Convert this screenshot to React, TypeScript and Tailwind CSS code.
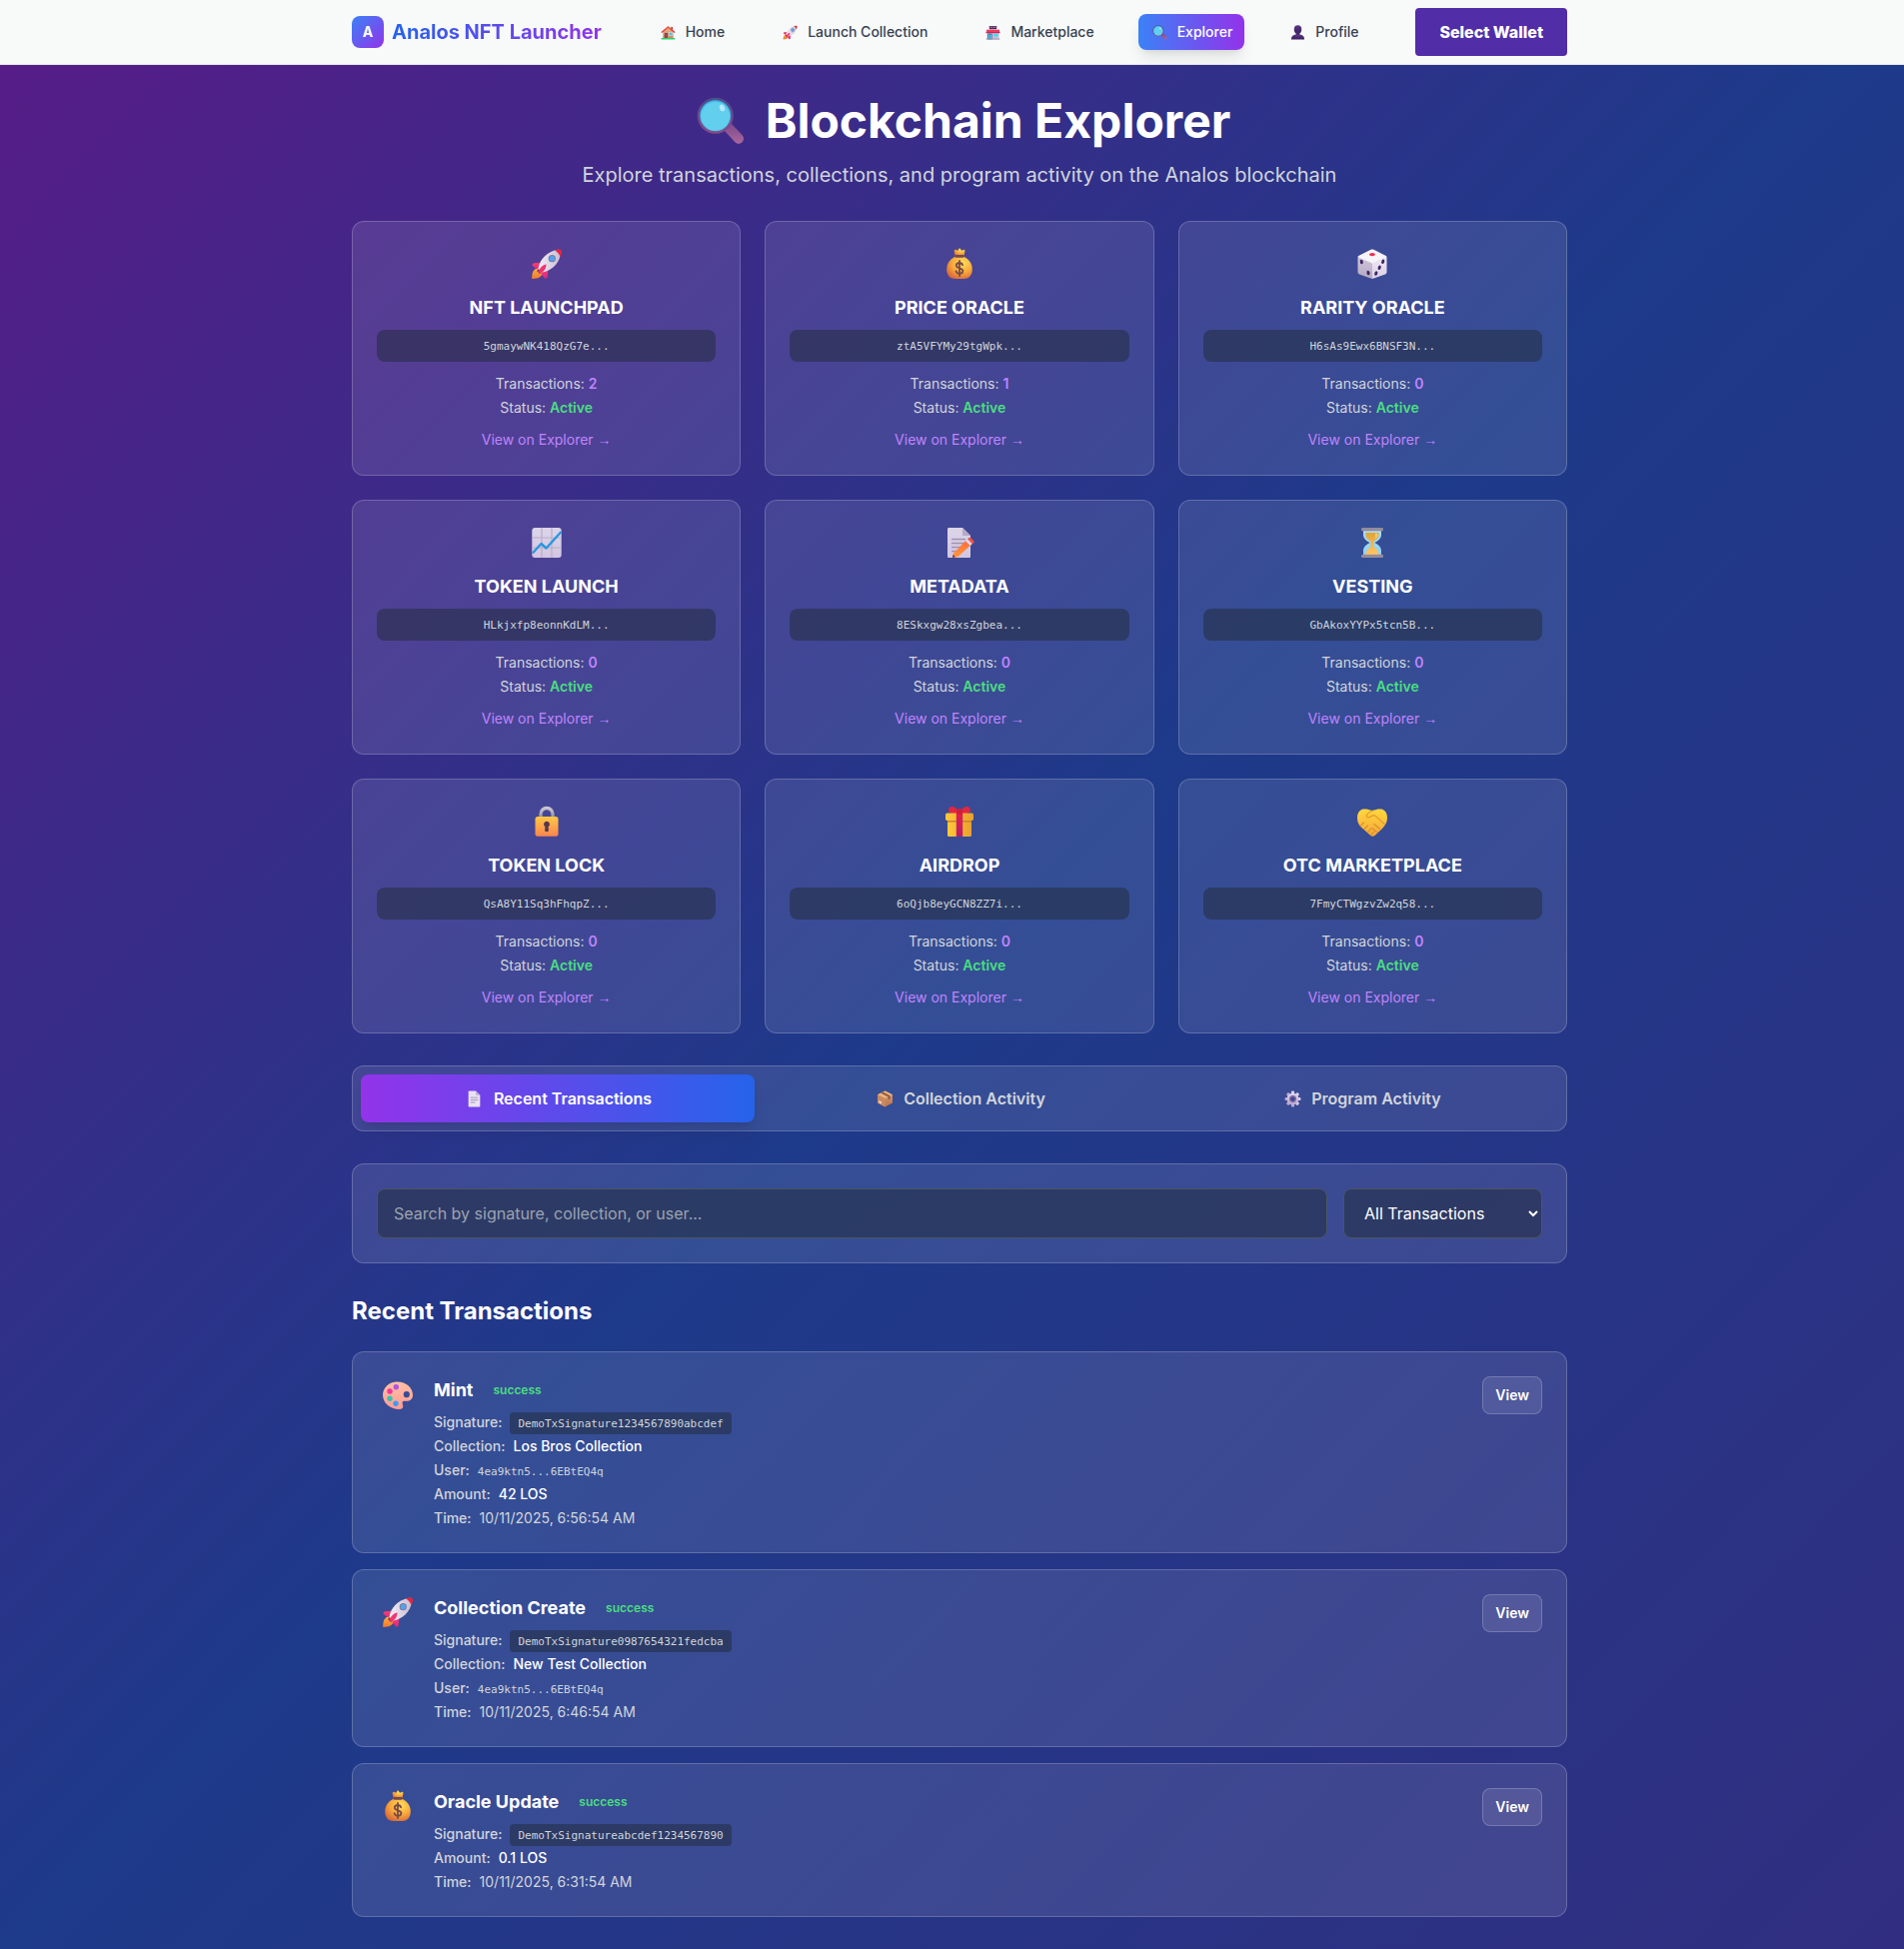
import { useState } from 'react';
import type { ReactNode } from 'react';
import clsx from 'clsx';

type EmojiName =
  | 'house' | 'rocket' | 'store' | 'magnifier' | 'bust' | 'moneybag' | 'dice' | 'chart' | 'memo'
  | 'hourglass' | 'lock' | 'gift' | 'handshake' | 'page' | 'package' | 'gear' | 'palette';

function Gradient({ id, from, to, horizontal }: { id: string; from: string; to: string; horizontal?: boolean }) {
  return (
    <linearGradient id={id} x1="0" y1="0" x2={horizontal ? '1' : '0'} y2={horizontal ? '0' : '1'}>
      <stop offset="0" stopColor={from} />
      <stop offset="1" stopColor={to} />
    </linearGradient>
  );
}

function SharedGradients() {
  return (
    <svg className="absolute size-0" aria-hidden="true">
      <defs>
        <Gradient id="g-roof" from="#f4603a" to="#d8354a" />
        <Gradient id="g-wall" from="#f2b58a" to="#c98a5f" />
        <Gradient id="g-body" from="#f3eef8" to="#c9bcd2" horizontal />
        <Gradient id="g-fin" from="#ff3f6c" to="#d92b82" />
        <Gradient id="g-flame" from="#ffb13d" to="#f07a2c" />
        <Gradient id="g-rim" from="#4a4f8c" to="#8a4a86" />
        <Gradient id="g-handle" from="#7d4a8e" to="#a9679c" />
        <Gradient id="g-bust" from="#5a3a86" to="#3b1d5c" />
        <radialGradient id="g-bag" cx="0.62" cy="0.3" r="0.75">
          <stop offset="0" stopColor="#ffdf5c" />
          <stop offset="0.55" stopColor="#f7a93b" />
          <stop offset="1" stopColor="#d9683a" />
        </radialGradient>
        <Gradient id="g-dieleft" from="#cfc6da" to="#b5a8c2" />
        <Gradient id="g-dieright" from="#efe9f5" to="#dad0e4" />
        <Gradient id="g-paper" from="#dcd6ea" to="#d3c5e2" />
        <Gradient id="g-pencil" from="#ff6a3c" to="#ff9a3a" />
        <Gradient id="g-glass" from="#a9dcf5" to="#8fd0f5" />
        <Gradient id="g-sand" from="#e0a436" to="#ffc765" />
        <Gradient id="g-lock" from="#ffc847" to="#f9844f" />
        <Gradient id="g-shackle" from="#c9c5d2" to="#8e8798" />
        <Gradient id="g-gift" from="#ffc93a" to="#e9a02f" horizontal />
        <Gradient id="g-ribbon" from="#e0224c" to="#b81c6c" />
        <Gradient id="g-hand" from="#ffd83e" to="#f5a63a" />
        <Gradient id="g-box" from="#dca273" to="#b9734f" />
        <Gradient id="g-gear" from="#e2d5f0" to="#b8a4cf" />
        <Gradient id="g-palette" from="#ffc0a4" to="#ff9c97" />
      </defs>
    </svg>
  );
}

const drawings: Record<EmojiName, ReactNode> = {
  house: (
    <>
      <rect x="22" y="4" width="4" height="8" fill="#b3455c" />
      <path d="M5 14 16 5l11 9v14H5z" fill="url(#g-wall)" />
      <path d="M16 2 1.500 14.200a1.500 1.500 0 0 0 2 2.200L16 6.500l12.500 9.900a1.500 1.500 0 0 0 2-2.200z" fill="url(#g-roof)" />
      <rect x="8" y="17" width="7" height="11" fill="#8a4b4f" />
      <rect x="18" y="16" width="7" height="7" fill="#3fc3f5" stroke="#f4e4dc" strokeWidth="1" />
      <rect x="1" y="27.500" width="30" height="3.500" rx="1.700" fill="#2fd06a" />
    </>
  ),
  rocket: (
    <>
      <path d="M9 19.500c-4 .5-7 3-7.500 7-.2 2-.5 3.500-.3 4.300.9.300 2.800 0 4.500-.2 3.800-.4 6.300-3.400 6.300-7z" fill="url(#g-flame)" />
      <path d="M8 21 11 24.500 9 26 6 23z" fill="#6d3b63" />
      <path d="M13.500 14.500 3.500 15.200c-1.400.3-2.300 1.400-2 2.600L5.500 21l6-1z" fill="url(#g-fin)" />
      <path d="M17.500 18.500 16.800 28.500c-.3 1.600-1.500 2.500-2.700 2L10.800 26.500l1.200-6z" fill="url(#g-fin)" />
      <path d="M7.500 20.500C9 12 16 3.500 27.500 1.800c1.600-.2 3 1 2.800 2.700C28.800 16 20.500 23 11.500 24.500z" fill="url(#g-body)" />
      <path d="M24 2.600c2.200-1 4.600-1.300 5.800-.9.900.3 1.400 1.500 1.100 3-.2 1.500-.6 2.900-1.300 4.500C28.800 6.500 26.500 4 24 2.600z" fill="#e8243f" />
      <path d="M15.500 16.500c-3.500.5-6.500 3.500-8 7.500l1.500 1.600c4-1.600 6.500-4.600 6.500-9.100z" fill="#f0356f" />
      <circle cx="21.300" cy="10.700" r="3.600" fill="#7d7794" />
      <circle cx="21.300" cy="10.700" r="2.600" fill="#4fa3f5" />
    </>
  ),
  store: (
    <>
      <rect x="3" y="13" width="26" height="17" fill="#cfc4dd" />
      <rect x="8" y="2" width="16" height="7" rx="1" fill="#4a2a5c" />
      <path d="M10.500 6V3.500M14 6V3.500M18 6V3.500M21.500 6V3.500" stroke="#f0d9ee" strokeWidth="1.400" />
      <path d="M2 10h28v6H2z" fill="#f5385f" />
      <path d="M1 15h30v2.500H1z" fill="#c3265c" />
      <rect x="5" y="18.500" width="9" height="12" fill="#27567f" />
      <rect x="6.500" y="20" width="2.600" height="10.500" fill="#57d5f2" />
      <rect x="10.300" y="20" width="2.600" height="10.500" fill="#57d5f2" />
      <rect x="17" y="19" width="10" height="6" fill="#57d5f2" />
      <rect x="1.500" y="29" width="29" height="2" fill="#93829f" />
    </>
  ),
  magnifier: (
    <>
      <path d="m19 21.500 3.200-3.200c.5-.4 1-.4 1.500 0l6.600 7c1.500 1.700 1.300 3.600 0 4.900s-3.300 1.400-4.800-.2L19 23z" fill="url(#g-handle)" />
      <circle cx="12.500" cy="12.500" r="12" fill="url(#g-rim)" />
      <circle cx="12.500" cy="12.500" r="10.300" fill="#3fb8ea" />
      <circle cx="12.500" cy="12.900" r="9.600" fill="#62cfee" />
      <ellipse cx="17" cy="7.300" rx="1.700" ry="2.300" fill="#b5e8fa" transform="rotate(-18 17 7.300)" />
    </>
  ),
  bust: (
    <>
      <ellipse cx="16" cy="9.500" rx="8" ry="9" fill="url(#g-bust)" />
      <path d="M12 15h8v8h-8z" fill="#4a2a70" />
      <path d="M2 31c0-7 3.500-9.500 9.500-10.500 3 2.300 6 2.300 9 0C26.500 21.500 30 24 30 31z" fill="url(#g-bust)" />
    </>
  ),
  moneybag: (
    <>
      <path d="M11.600 8 10.600 3.200c-.2-1.200 1-1.800 2-1.200l1.600.8L15.200 1c.5-.9 1.300-.9 1.800 0l1 1.800 1.700-.8c1-.5 2 .1 1.800 1.200L20.500 8z" fill="url(#g-bag)" />
      <path d="M12 8.500h8c6 3 8.800 7.500 8.800 13 0 6.500-3.800 9.500-8.800 9.500h-8c-5 0-8.800-3-8.800-9.500 0-5.500 2.800-10 8.800-13z" fill="url(#g-bag)" />
      <rect x="11.500" y="7" width="9" height="2.800" rx="1" fill="#75474f" />
      <path d="M19.100 17.200c-.4-1.500-1.500-2.200-3.100-2.200-1.900 0-3.200 1-3.200 2.600 0 3.600 6.600 1.900 6.600 5.500 0 1.700-1.400 2.700-3.400 2.700-1.800 0-3.100-.9-3.400-2.600M16 13v15" fill="none" stroke="#7a4b45" strokeWidth="1.800" strokeLinecap="round" />
    </>
  ),
  dice: (
    <>
      <path d="M16 15v16L3.200 26.500C2 26 1.500 25 1.500 24V9z" fill="url(#g-dieleft)" />
      <path d="M16 15v16l12.800-4.500c1.200-.5 1.700-1.500 1.700-2.500V9z" fill="url(#g-dieright)" />
      <path d="M16 15.500 2 9.500c-.6-.4-.5-1.200.2-1.600L14.500 1.800c1-.5 2-.5 3 0l12.300 6.100c.7.4.8 1.200.2 1.600z" fill="#f7f4fa" />
      <ellipse cx="16" cy="6.600" rx="2.900" ry="1.700" fill="#f0304f" />
      <g fill="#3f2465">
        <ellipse cx="5.300" cy="14" rx="1.500" ry="2.300" transform="rotate(-15 5.300 14)" />
        <ellipse cx="12" cy="25" rx="1.500" ry="2.300" transform="rotate(-15 12 25)" />
        <ellipse cx="26.700" cy="13.800" rx="1.500" ry="2.300" transform="rotate(18 26.700 13.800)" />
        <ellipse cx="23.200" cy="19.700" rx="1.500" ry="2.300" transform="rotate(18 23.200 19.700)" />
        <ellipse cx="19.800" cy="25.500" rx="1.500" ry="2.300" transform="rotate(18 19.800 25.500)" />
      </g>
    </>
  ),
  chart: (
    <>
      <rect x="1.300" y="1" width="29.400" height="30" rx="3" fill="url(#g-paper)" />
      <path d="M11 1v30M21 1v30M1.300 11h29.400M1.300 21h29.400" stroke="#b9adc9" strokeWidth="1.200" />
      <path d="M1.800 26.500 10.500 17l5 4.500L30.500 5" fill="none" stroke="#2a97dc" strokeWidth="2.400" strokeLinejoin="round" />
    </>
  ),
  memo: (
    <>
      <path d="M4 2.500C4 1.500 4.700 1 5.500 1H19l8 8v20.500c0 1-.7 1.500-1.500 1.500h-20C4.700 31 4 30.500 4 29.500z" fill="url(#g-paper)" />
      <path d="M19 1v6.500c0 1 .6 1.500 1.500 1.500H27z" fill="#b5a9c6" />
      <path d="M8 12.500h14M8 16.500h14M8 20.500h11M8 24.500h7" stroke="#9f95ad" strokeWidth="1.500" />
      <path d="m10 26.500 13-13.300 4.800 4.800L14.500 30 9 31z" fill="url(#g-pencil)" />
      <path d="m22 14.200 2.200-2.200 4.800 4.800-2.200 2.200z" fill="#ded7ee" />
      <path d="m24 12.300 1-1c.8-.8 1.600-.8 2.400 0l2.700 2.700c.8.8.8 1.500 0 2.300l-1.100 1z" fill="#f25345" />
      <path d="m9.600 27.800 2.400 2.500-3.200.8z" fill="#6b3a50" />
    </>
  ),
  hourglass: (
    <>
      <path d="M7 3.500h18v4c0 4-2 6-6.500 8.500 4.500 2.500 6.500 4.500 6.500 8.500v4H7v-4c0-4 2-6 6.500-8.500C9 13.500 7 11.500 7 7.500z" fill="url(#g-glass)" />
      <path d="M9.500 6h13v2.500c0 3-2.500 4.500-5 6v6c3 1.500 5 4 5 7.500h-13c0-3.500 2-6 5-7.500v-6c-2.500-1.500-5-3-5-6z" fill="url(#g-sand)" />
      <path d="M19 6.500h2.500v2c0 1.500-1 2.500-2.500 3.500z" fill="#ffd985" opacity=".7" />
      <rect x="5" y="1" width="22" height="3.300" rx="1.300" fill="#958c99" />
      <rect x="5" y="27.700" width="22" height="3.300" rx="1.300" fill="#958c99" />
    </>
  ),
  lock: (
    <>
      <path d="M10 13V8.500a6 6 0 0 1 12 0V13" fill="none" stroke="url(#g-shackle)" strokeWidth="3.300" />
      <rect x="4.500" y="11" width="23" height="19.800" rx="2.500" fill="url(#g-lock)" />
      <path d="M16 15.700a3 3 0 0 0-1.600 5.500l-.3 3.600c0 .7.400 1.200 1 1.200h1.800c.6 0 1-.5 1-1.200l-.3-3.600A3 3 0 0 0 16 15.700z" fill="#54394c" />
    </>
  ),
  gift: (
    <>
      <path d="M13 8C8 8.500 5 7 5 4.500 5 2 7 .8 9 1c3 .2 5 3 5 7zM19 8c5 .5 8-1 8-3.500C27 2 25 .8 23 1c-3 .2-5 3-5 7z" fill="#e3263f" />
      <rect x="4" y="14" width="24" height="17" rx="1.500" fill="url(#g-gift)" />
      <rect x="2" y="7.500" width="28" height="7.500" rx="1.700" fill="url(#g-gift)" />
      <path d="M4 15h24v1.500H4z" fill="#c9832b" />
      <path d="M12.800 6.500h6.400V31h-6.400z" fill="url(#g-ribbon)" />
      <rect x="13" y="3" width="6" height="6" rx="1.500" fill="#cf1f3c" />
    </>
  ),
  handshake: (
    <>
      <path d="M1 12c0-4.500 2.500-8 6-8.500 3-.3 5.500.2 9 1.500 3.500-1.300 6-1.800 9-1.500 3.500.5 6 4 6 8.500 0 5-2 7.500-5 11l-7 6.500c-1.800 1.700-4 1.500-5.500-.2l-9-8C2 18.500 1 16 1 12z" fill="url(#g-hand)" />
      <path d="M16.500 5c-2.500.8-5 2.500-6.200 4.600-.8 1.500 1 2.800 2.700 2 2-.9 3.400-1.900 5.200-2l9.800 8.700" fill="none" stroke="#e39a2c" strokeWidth="1.200" strokeLinecap="round" />
      <path d="m4.500 20 3-3M8 23.500l3.500-3.500M11.500 26.700 15 23M14.800 29l3-3M23.500 23.500 18 18.500M20.500 26.500 16 22.500" stroke="#dd8f2e" strokeWidth="1.100" strokeLinecap="round" />
    </>
  ),
  page: (
    <>
      <path d="M5 2.500C5 1.500 5.600 1 6.500 1H19l8 8v20.500c0 1-.6 1.500-1.500 1.500h-19C5.600 31 5 30.500 5 29.500z" fill="#e9e1f4" />
      <path d="M19 1v6.500c0 1 .6 1.500 1.500 1.500H27z" fill="#b9abd0" />
      <path d="M9 13.500h14M9 18h14M9 22.500h9" stroke="#a297b3" strokeWidth="1.800" />
    </>
  ),
  package: (
    <>
      <path d="M16 1 30 8v15.500L16 31 2 23.500V8z" fill="url(#g-box)" />
      <path d="M16 1 30 8l-14 7L2 8z" fill="#eab583" />
      <path d="M16 15v16L2 23.500V8z" fill="#c98a5e" />
      <path d="m8 5 14 7v5.500l3.500-1.700V10L12 3z" fill="#92583f" />
      <path d="m4.500 19 5 2.500v4l-5-2.500z" fill="#efd9da" />
    </>
  ),
  gear: (
    <>
      <g fill="url(#g-gear)">
        {[0, 45, 90, 135].map((angle) => (
          <rect key={angle} x="13" y="1" width="6" height="30" rx="2" transform={`rotate(${angle} 16 16)`} />
        ))}
        <circle cx="16" cy="16" r="11" />
      </g>
      <circle cx="16" cy="16" r="6.500" fill="#7e6a9c" />
      <circle cx="16" cy="16" r="4" fill="#3c4a94" />
    </>
  ),
  palette: (
    <>
      <path d="M15.500 3.500C7 3.500 1 9.500 1 16.800 1 24.500 8 31 17.500 31c2.700 0 4-1.500 3.700-3.500-.2-1.500-.9-2.200-.6-3.500.3-1.200 1.500-1.500 3.200-1.300 4.200.3 7.200-1.600 7.200-6 0-7.700-7-13.200-15.500-13.200zm9.300 9.600a3.100 3.100 0 1 1 0 6.200 3.100 3.100 0 0 1 0-6.200z" fill="url(#g-palette)" fillRule="evenodd" />
      <circle cx="14.300" cy="8.800" r="2.700" fill="#b155e0" />
      <circle cx="8" cy="13" r="2.700" fill="#f5359a" />
      <circle cx="8" cy="20.300" r="2.700" fill="#36c2b0" />
      <circle cx="14" cy="25.200" r="2.700" fill="#3b9cf2" />
    </>
  ),
};

function Emoji({ name, className }: { name: EmojiName; className: string }) {
  return (
    <svg viewBox="0 0 32 32" className={clsx('shrink-0', className)} aria-hidden="true">
      {drawings[name]}
    </svg>
  );
}

const navItems: { label: string; icon: EmojiName; active?: boolean }[] = [
  { label: 'Home', icon: 'house' },
  { label: 'Launch Collection', icon: 'rocket' },
  { label: 'Marketplace', icon: 'store' },
  { label: 'Explorer', icon: 'magnifier', active: true },
  { label: 'Profile', icon: 'bust' },
];

const programs: { name: string; icon: EmojiName; address: string; count: number }[] = [
  { name: 'NFT LAUNCHPAD', icon: 'rocket', address: '5gmaywNK418QzG7e...', count: 2 },
  { name: 'PRICE ORACLE', icon: 'moneybag', address: 'ztA5VFYMy29tgWpk...', count: 1 },
  { name: 'RARITY ORACLE', icon: 'dice', address: 'H6sAs9Ewx6BNSF3N...', count: 0 },
  { name: 'TOKEN LAUNCH', icon: 'chart', address: 'HLkjxfp8eonnKdLM...', count: 0 },
  { name: 'METADATA', icon: 'memo', address: '8ESkxgw28xsZgbea...', count: 0 },
  { name: 'VESTING', icon: 'hourglass', address: 'GbAkoxYYPx5tcn5B...', count: 0 },
  { name: 'TOKEN LOCK', icon: 'lock', address: 'QsA8Y11Sq3hFhqpZ...', count: 0 },
  { name: 'AIRDROP', icon: 'gift', address: '6oQjb8eyGCN8ZZ7i...', count: 0 },
  { name: 'OTC MARKETPLACE', icon: 'handshake', address: '7FmyCTWgzvZw2q58...', count: 0 },
];

const tabs: { label: string; icon: EmojiName }[] = [
  { label: 'Recent Transactions', icon: 'page' },
  { label: 'Collection Activity', icon: 'package' },
  { label: 'Program Activity', icon: 'gear' },
];

interface Transaction {
  title: string;
  icon: EmojiName;
  signature: string;
  collection?: string;
  user?: string;
  amount?: string;
  time: string;
}

const transactions: Transaction[] = [
  {
    title: 'Mint',
    icon: 'palette',
    signature: 'DemoTxSignature1234567890abcdef',
    collection: 'Los Bros Collection',
    user: '4ea9ktn5...6EBtEQ4q',
    amount: '42 LOS',
    time: '10/11/2025, 6:56:54 AM',
  },
  {
    title: 'Collection Create',
    icon: 'rocket',
    signature: 'DemoTxSignature0987654321fedcba',
    collection: 'New Test Collection',
    user: '4ea9ktn5...6EBtEQ4q',
    time: '10/11/2025, 6:46:54 AM',
  },
  {
    title: 'Oracle Update',
    icon: 'moneybag',
    signature: 'DemoTxSignatureabcdef1234567890',
    amount: '0.1 LOS',
    time: '10/11/2025, 6:31:54 AM',
  },
];

function Navbar() {
  return (
    <header className="border-b border-gray-200 bg-[#f8faf9] pl-[15px]">
      <div className="mx-auto flex h-16 max-w-[1280px] items-center justify-between px-8">
        <a href="#home" className="flex items-center gap-2">
          <span className="flex size-8 items-center justify-center rounded-lg bg-linear-to-br/srgb from-[#3b82f6] to-[#9333ea] text-sm font-bold text-white">
            A
          </span>
          <span className="bg-linear-to-r/srgb from-[#2563eb] to-[#9333ea] bg-clip-text text-xl font-bold text-transparent">
            Analos NFT Launcher
          </span>
        </a>
        <nav className="flex items-center gap-8" aria-label="Main">
          {navItems.map((item) => (
            <a
              key={item.label}
              href={`#${item.label.toLowerCase().replace(' ', '-')}`}
              aria-current={item.active ? 'page' : undefined}
              className={clsx(
                'flex items-center gap-2 rounded-lg px-3 py-2 text-sm font-medium',
                item.active
                  ? 'bg-linear-to-r/srgb from-[#3b82f6] to-[#9333ea] text-white shadow-lg'
                  : 'text-[#374151]',
              )}
            >
              <span className="flex w-[19px] justify-center">
                <Emoji name={item.icon} className="size-[15px]" />
              </span>
              {item.label}
            </a>
          ))}
        </nav>
        <button type="button" className="h-12 rounded bg-[#512da8] px-6 text-base font-extrabold text-white">
          Select Wallet
        </button>
      </div>
    </header>
  );
}

function ProgramCard({ name, icon, address, count }: (typeof programs)[number]) {
  return (
    <article className="rounded-xl border border-white/20 bg-white/10 p-6 text-center">
      <div className="mb-3 flex h-9 items-center justify-center">
        <Emoji name={icon} className="size-8" />
      </div>
      <h2 className="mb-2 text-lg font-bold text-white">{name}</h2>
      <p className="mb-3 rounded-lg bg-[#1f2937]/50 px-2 pt-[9px] pb-[7px] font-['DejaVu_Sans_Mono',monospace] text-[11px] leading-4 text-[#d1d5db]">
        {address}
      </p>
      <div className="space-y-1 text-sm text-[#d1d5db]">
        <p>
          Transactions: <span className="font-semibold text-[#c084fc]">{count}</span>
        </p>
        <p>
          Status: <span className="font-semibold text-[#4ade80]">Active</span>
        </p>
      </div>
      <a href="#explorer" className="mt-3 inline-block text-sm text-[#c084fc]">
        View on Explorer <span className="font-['Liberation_Sans',sans-serif]">→</span>
      </a>
    </article>
  );
}

function DetailRow({ label, children }: { label: string; children: ReactNode }) {
  return (
    <div className="flex h-5 items-baseline gap-2 whitespace-nowrap">
      <dt className="font-medium">{label}:</dt>
      <dd>{children}</dd>
    </div>
  );
}

function TransactionCard({ tx }: { tx: Transaction }) {
  return (
    <li className="flex items-start justify-between rounded-xl border border-white/20 bg-white/10 p-6">
      <div className="flex items-start gap-4">
        <span className="flex h-9 w-[41px] items-center justify-center">
          <Emoji name={tx.icon} className="size-8" />
        </span>
        <div>
          <div className="mb-2 flex items-center gap-3">
            <h3 className="text-lg font-bold text-white">{tx.title}</h3>
            <span className="px-2 text-xs font-semibold text-[#4ade80]">success</span>
          </div>
          <dl className="space-y-1 text-sm text-[#d1d5db]">
            <DetailRow label="Signature">
              <code className="rounded bg-[#1f2937]/50 px-2 pt-[5px] pb-1 font-['DejaVu_Sans_Mono',monospace] text-[11px]">
                {tx.signature}
              </code>
            </DetailRow>
            {tx.collection && (
              <DetailRow label="Collection">
                <span className="font-medium text-white">{tx.collection}</span>
              </DetailRow>
            )}
            {tx.user && (
              <DetailRow label="User">
                <span className="font-['DejaVu_Sans_Mono',monospace] text-[11px]">{tx.user}</span>
              </DetailRow>
            )}
            {tx.amount && (
              <DetailRow label="Amount">
                <span className="font-medium text-white">{tx.amount}</span>
              </DetailRow>
            )}
            <DetailRow label="Time">{tx.time}</DetailRow>
          </dl>
        </div>
      </div>
      <button
        type="button"
        className="rounded-lg border border-white/20 bg-white/10 px-3 py-2 text-sm font-semibold text-white"
      >
        View
      </button>
    </li>
  );
}

export default function App() {
  const [activeTab, setActiveTab] = useState(0);

  return (
    <div className="min-h-screen bg-[linear-gradient(to_bottom_right,#581c87,#1e3a8a,#312e81)] font-['Inter',sans-serif]">
      <SharedGradients />
      <Navbar />
      <main className="pl-[15px]">
        <div className="mx-auto max-w-[1280px] px-8 py-8">
          <div className="mb-8 text-center">
            <h1 className="mb-4 flex h-12 items-center justify-center gap-3 text-5xl leading-none font-bold text-white">
              <span className="flex w-[65px] justify-center">
                <Emoji name="magnifier" className="size-12" />
              </span>
              Blockchain Explorer
            </h1>
            <p className="text-xl text-[#d1d5db]">
              Explore transactions, collections, and program activity on the Analos blockchain
            </p>
          </div>

          <section className="mb-8 grid grid-cols-3 gap-6" aria-label="Programs">
            {programs.map((program) => (
              <ProgramCard key={program.name} {...program} />
            ))}
          </section>

          <div role="tablist" className="mb-8 flex gap-2 rounded-xl border border-white/20 bg-white/10 p-2">
            {tabs.map((tab, index) => (
              <button
                key={tab.label}
                type="button"
                role="tab"
                aria-selected={index === activeTab}
                onClick={() => setActiveTab(index)}
                className={clsx(
                  'flex flex-1 items-center justify-center gap-2 rounded-lg px-6 py-3 font-semibold',
                  index === activeTab
                    ? 'bg-linear-to-r/srgb from-[#9333ea] to-[#2563eb] text-white shadow-lg'
                    : 'text-[#d1d5db]',
                )}
              >
                <span className="flex w-[22px] justify-center">
                  <Emoji name={tab.icon} className="size-[17px]" />
                </span>
                {tab.label}
              </button>
            ))}
          </div>

          <div className="mb-8 flex gap-4 rounded-xl border border-white/20 bg-white/10 p-6">
            <input
              type="text"
              aria-label="Search transactions"
              placeholder="Search by signature, collection, or user..."
              className="min-w-0 flex-1 rounded-lg border border-[#4b5563] bg-[#1f2937]/50 px-4 py-3 text-white placeholder:text-[#9ca3af]"
            />
            <select
              aria-label="Transaction type"
              className="w-[199px] rounded-lg border border-[#4b5563] bg-[#1f2937]/50 px-4 py-3 text-white"
            >
              <option>All Transactions</option>
              <option>Mint</option>
              <option>Collection Create</option>
              <option>Oracle Update</option>
            </select>
          </div>

          <section>
            <h2 className="mb-6 text-2xl font-bold text-white">Recent Transactions</h2>
            <ul className="space-y-4">
              {transactions.map((tx) => (
                <TransactionCard key={tx.signature} tx={tx} />
              ))}
            </ul>
          </section>
        </div>
      </main>
    </div>
  );
}
